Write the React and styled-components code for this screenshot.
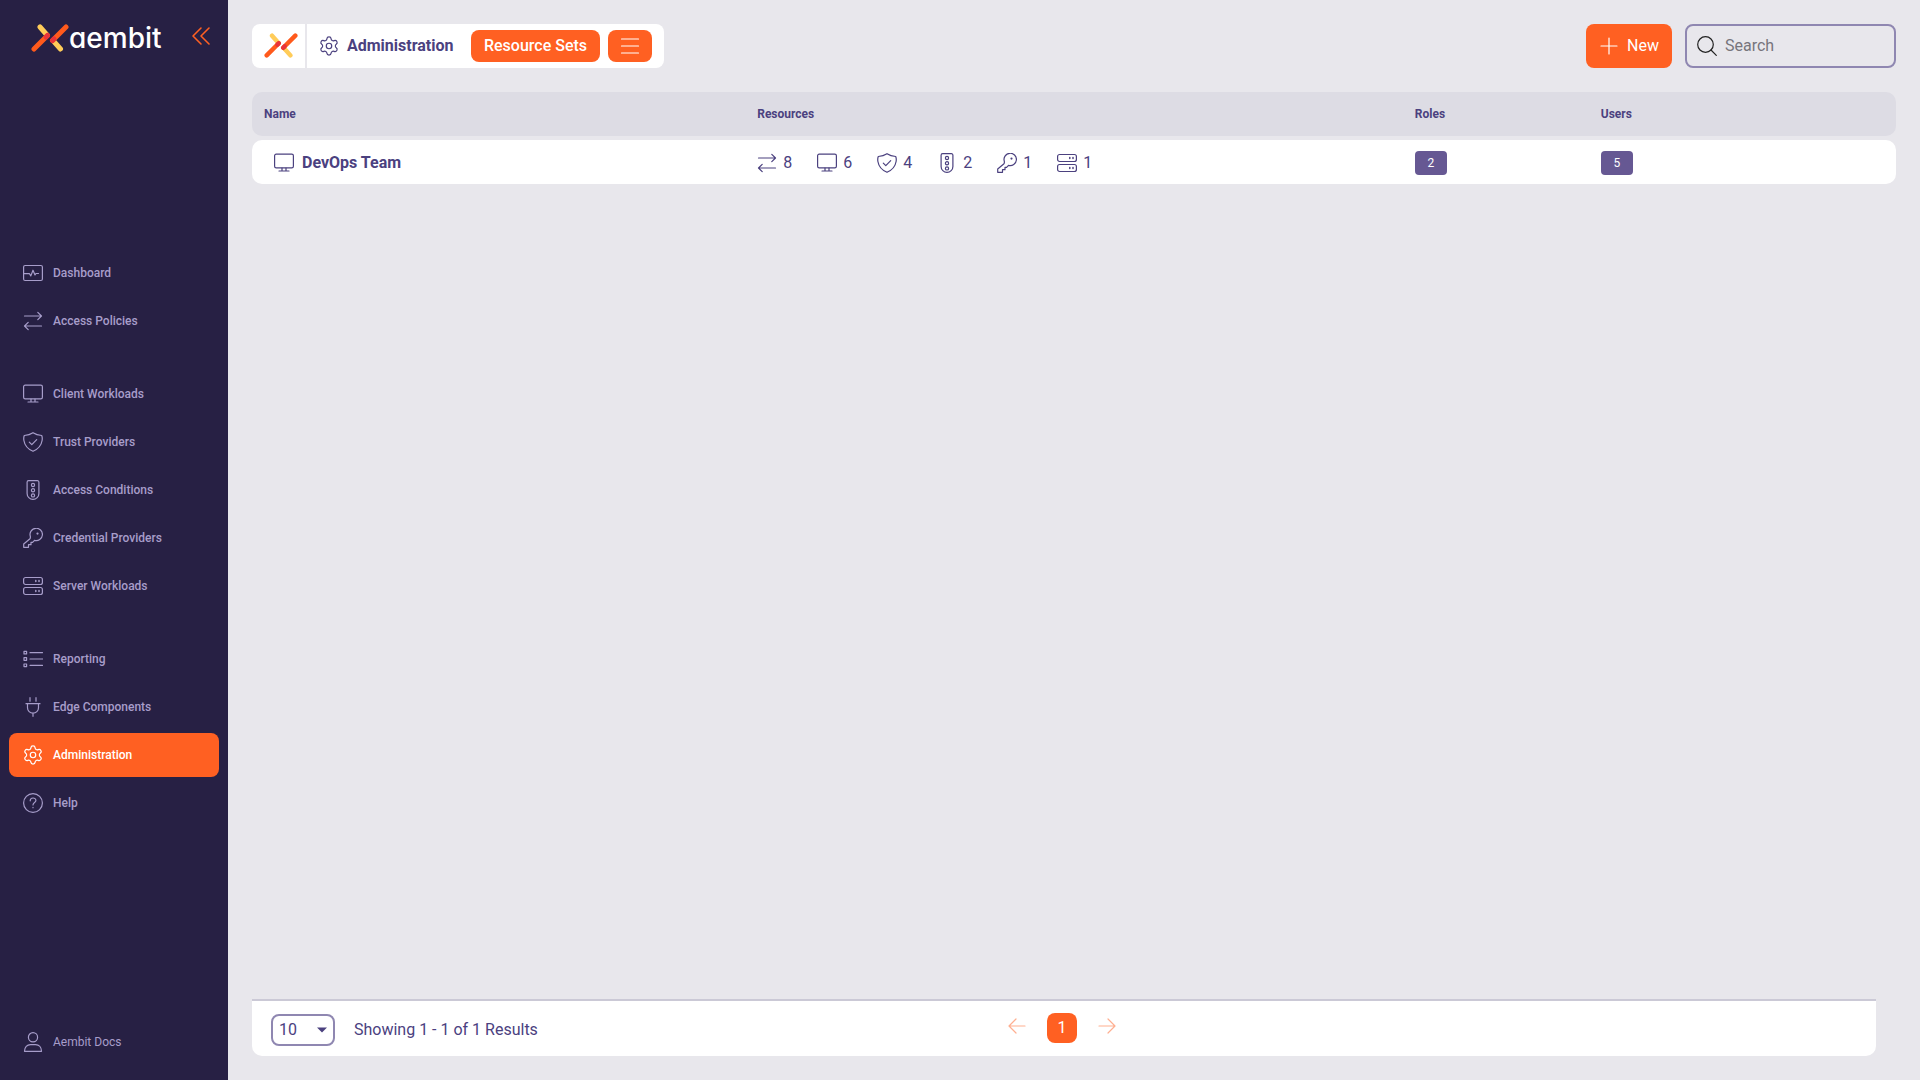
import React from 'react';
import styled, { createGlobalStyle } from 'styled-components';
import { Settings } from 'lucide-react';

const GlobalStyle = createGlobalStyle`
  * {
    box-sizing: border-box;
  }

  body {
    margin: 0;
    background: #e8e7ec;
    color: #4b417f;
    font-family: Roboto, 'Open Sans', sans-serif;
    font-size: 16px;
    line-height: 20px;
  }

  button, input, select {
    font: inherit;
    color: inherit;
  }
`

const Page = styled.div`
  display: flex;
  min-height: 100vh;
`

const Sidebar = styled.aside`
  display: grid;
  grid-template-rows: 1fr auto 1fr;
  flex: 0 0 228px;
  padding: 0 9px 4px;
  background: #272044;
`

const Brand = styled.div`
  display: flex;
  align-items: flex-start;
  justify-content: space-between;
  padding: 20px 8px 0 22px;
`

const BrandLink = styled.a`
  display: flex;
  align-items: center;
  height: 36px;
  color: #fff;
  font-family: Inter, sans-serif;
  font-size: 28px;
  font-weight: 500;
  font-feature-settings: 'cv11';
  line-height: 32px;
  text-decoration: none;
`

const CollapseButton = styled.button`
  display: flex;
  padding: 6px 0;
  border: 0;
  background: none;
  color: #ff6022;
  cursor: pointer;
`

const Nav = styled.nav`
  display: flex;
  flex-direction: column;
  gap: 29px;
`

const NavGroup = styled.div`
  display: flex;
  flex-direction: column;
  gap: 4px;
`

const NavItem = styled.a`
  display: flex;
  align-items: center;
  gap: 10px;
  height: 44px;
  padding: 0 14px;
  border-radius: 8px;
  background: ${props => (props.$active ? '#ff6022' : 'transparent')};
  color: ${props => (props.$active ? '#fff' : '#a79dca')};
  font-size: 12px;
  font-weight: ${props => (props.$light ? 400 : 500)};
  text-decoration: none;
`

const Account = styled.div`
  align-self: end;
  padding-bottom: 12px;
`

const Main = styled.main`
  display: flex;
  flex: 1;
  flex-direction: column;
  min-width: 0;
  padding: 24px;
`

const Toolbar = styled.header`
  display: flex;
  align-items: center;
  justify-content: space-between;
  margin-bottom: 20px;
`

const Crumbs = styled.div`
  display: flex;
  align-items: center;
  height: 44px;
  padding-right: 12px;
  border-radius: 8px;
  background: #fff;
`

const CrumbLogo = styled.a`
  display: flex;
  align-items: center;
  justify-content: center;
  width: 55px;
  height: 44px;
  padding-left: 4px;
  border-right: 2px solid #e8e7ec;
`

const Crumb = styled.a`
  display: flex;
  align-items: center;
  gap: 8px;
  min-width: 164px;
  padding: 0 12px;
  color: #4b417f;
  font-weight: 700;
  text-decoration: none;
`

const OrangeButton = styled.button`
  display: flex;
  align-items: center;
  justify-content: center;
  gap: 8px;
  min-width: ${props => props.$width || '44px'};
  height: ${props => (props.$tall ? '44px' : '32px')};
  padding: 0 12px;
  border: 0;
  border-radius: 8px;
  background: #ff6022;
  color: #fff;
  font-weight: ${props => (props.$tall ? 400 : 500)};
  cursor: pointer;

  & + & {
    margin-left: 8px;
  }
`

const Actions = styled.div`
  display: flex;
  gap: 13px;
`

const SearchBox = styled.label`
  display: flex;
  align-items: center;
  gap: 8px;
  width: 211px;
  height: 44px;
  padding: 0 10px;
  border: 2px solid #8f87b1;
  border-radius: 8px;
  color: #222;
`

const SearchInput = styled.input`
  flex: 1;
  min-width: 0;
  padding: 0;
  border: 0;
  outline: 0;
  background: none;

  &::placeholder {
    color: #77757c;
    opacity: 1;
  }
`

const Table = styled.table`
  width: 100%;
  table-layout: fixed;
  border-collapse: separate;
  border-spacing: 0 4px;
  text-align: left;
`

const cellEnds = `
  &:first-child {
    border-radius: 10px 0 0 10px;
  }

  &:last-child {
    border-radius: 0 10px 10px 0;
  }
`

const HeadCell = styled.th`
  width: ${props => props.$width || 'auto'};
  height: 44px;
  padding: 0 12px;
  background: #dddce4;
  font-size: 12px;
  font-weight: 700;
  ${cellEnds}
`

const Cell = styled.td`
  height: 44px;
  padding: 2px 12px 0;
  background: #fff;
  ${cellEnds}
`

const SetName = styled.a`
  display: flex;
  align-items: center;
  gap: 8px;
  padding-left: 10px;
  color: inherit;
  font-weight: 700;
  text-decoration: none;
`

const Counts = styled.div`
  display: flex;
  gap: 24px;
`

const Count = styled.span`
  display: flex;
  align-items: center;
  gap: 6px;
  width: 36px;
`

const Badge = styled.span`
  display: flex;
  align-items: center;
  justify-content: center;
  width: 32px;
  height: 24px;
  border-radius: 4px;
  background: #665893;
  color: #fff;
  font-size: 12px;
`

const Footer = styled.footer`
  display: grid;
  grid-template-columns: 1fr auto 1fr;
  align-items: center;
  height: 57px;
  margin: auto 20px 0 0;
  padding: 2px 23px 0 19px;
  border-top: 2px solid #cbc9d6;
  border-radius: 0 0 10px 10px;
  background: #fff;
`

const PageSize = styled.div`
  display: flex;
  align-items: center;
  gap: 19px;
`

const SelectWrap = styled.label`
  display: flex;
  position: relative;

  svg {
    position: absolute;
    top: 13px;
    right: 8px;
    pointer-events: none;
  }
`

const Select = styled.select`
  width: 64px;
  height: 32px;
  padding: 0 6px;
  border: 2px solid #8f87b1;
  border-radius: 8px;
  background: #fff;
  appearance: none;
`

const Pager = styled.div`
  display: flex;
  align-items: center;
  gap: 20px;
  padding-bottom: 4px;
`

const PagerArrow = styled.button`
  display: flex;
  padding: 0 0 4px;
  border: 0;
  background: none;
  color: #ffaf90;
`

const PagerNumber = styled.button`
  width: 30px;
  height: 30px;
  padding: 0;
  border: 0;
  border-radius: 8px;
  background: #ff6022;
  color: #fff;
`

const Icon = ({ size = 20, children }) => (
    <svg width={size} height={size} viewBox="0 0 20 20" fill="none" stroke="currentColor" strokeWidth="1.2" strokeLinecap="round" strokeLinejoin="round" aria-hidden="true">
        {children}
    </svg>
)

const DashboardIcon = () => (
    <Icon>
        <rect x="0.6" y="2.5" width="18.8" height="15" rx="1.5" />
        <path d="M1 10.7h5.5l1.3 2.2L10 7.2l2 4.8 1-1.5h2.5" />
    </Icon>
)

const ArrowsIcon = () => (
    <Icon>
        <path d="M1.5 5h17M14.8 1.300l3.700 3.700-3.700 3.700M18.5 15h-17M5.200 11.300L1.500 15l3.700 3.700" />
    </Icon>
)

const MonitorIcon = () => (
    <Icon>
        <rect x="0.6" y="1.2" width="18.8" height="13.6" rx="1.6" />
        <path d="M8 15v2.700M12 15v2.700M5 18h10" />
    </Icon>
)

const ShieldIcon = () => (
    <Icon>
        <path d="M10 .7C7.4 2.4 4.5 3.2 1.3 3.5c-.6 1.5-.7 3.2-.4 5 .8 5 4.2 8.700 9.100 10.800 4.900-2.100 8.300-5.800 9.100-10.800.3-1.800.2-3.500-.4-5C15.500 3.200 12.600 2.400 10 .7z" />
        <path d="M6.300 10.200l2.500 2.500 4.900-5" />
    </Icon>
)

const TrafficIcon = () => (
    <Icon>
        <path d="M5.600.7h8.800a1.500 1.500 0 0 1 1.500 1.500v11.200a5.900 5.900 0 0 1-11.800 0V2.200A1.500 1.500 0 0 1 5.600.7z" />
        <circle cx="10" cy="5" r="1.6" />
        <circle cx="10" cy="10.2" r="1.6" />
        <circle cx="10" cy="15.4" r="1.6" />
    </Icon>
)

const KeyIcon = () => (
    <Icon>
        <path d="M.7 16v3.300h4.800v-2.600H8v-2.400h1.600l1.900-1.900a6.200 6.200 0 1 0-4.200-4.100c.2 1 .1 2-.6 2.700z" />
        <circle cx="14.5" cy="5.600" r=".5" fill="currentColor" />
    </Icon>
)

const ServerIcon = () => (
    <Icon>
        <rect x="0.6" y="1.5" width="18.8" height="7" rx="2" />
        <rect x="0.6" y="11.5" width="18.8" height="7" rx="2" />
        <path d="M12.800 4.600v.8M16 4.600v.8M12.800 14.600v.8M16 14.600v.8" strokeWidth="1.5" />
    </Icon>
)

const ReportIcon = () => (
    <Icon>
        <path d="M7 3.700h12.500M7 10h12.500M7 16.300h12.500" />
        <rect x="1" y="2.300" width="2.600" height="2.600" />
        <rect x="1" y="8.700" width="2.600" height="2.600" />
        <rect x="1" y="15" width="2.600" height="2.600" />
    </Icon>
)

const PlugIcon = () => (
    <Icon>
        <path d="M7 .7v3.500M13 .7v3.500M3 6.700h14M4.500 6.700v4a5.500 5.500 0 0 0 11 0v-4M10 16.300v3" />
    </Icon>
)

const GearIcon = () => <Settings size={20} strokeWidth={1.3} viewBox="1 1 22 22" aria-hidden="true" />

const HelpIcon = () => (
    <Icon>
        <circle cx="10" cy="10" r="9.4" />
        <path d="M7.200 7.800c0-3.700 5.700-3.600 5.700-.3 0 2.100-2.900 2.100-2.900 4.500M10 14.400v.3" />
    </Icon>
)

const PersonIcon = () => (
    <Icon>
        <circle cx="10" cy="5.300" r="4.600" />
        <path d="M1.500 19.300c0-4.200 2.600-6.700 6-6.700h5c3.400 0 6 2.500 6 6.700z" />
    </Icon>
)

const Mark = ({ width }) => (
    <svg width={width} viewBox="0 0 38 28" fill="none" strokeWidth="5" strokeLinecap="round" aria-hidden="true">
        <path d="M9 3l7 8M22 16.500l7.500 8.500" stroke="#ffcc59" />
        <path d="M3 25l13.500-13.500M21.500 16.500L35 3" stroke="#ff5a1c" />
        <path d="M15 13l1.500-1.500M21.500 16.500L23 15" stroke="#e8343a" />
    </svg>
)

const navGroups = [
    [
        { label: 'Dashboard', icon: DashboardIcon },
        { label: 'Access Policies', icon: ArrowsIcon },
    ],
    [
        { label: 'Client Workloads', icon: MonitorIcon },
        { label: 'Trust Providers', icon: ShieldIcon },
        { label: 'Access Conditions', icon: TrafficIcon },
        { label: 'Credential Providers', icon: KeyIcon },
        { label: 'Server Workloads', icon: ServerIcon },
    ],
    [
        { label: 'Reporting', icon: ReportIcon },
        { label: 'Edge Components', icon: PlugIcon },
        { label: 'Administration', icon: GearIcon, active: true },
        { label: 'Help', icon: HelpIcon },
    ],
]

const resourceSets = [
    {
        name: 'DevOps Team',
        resources: [
            { icon: ArrowsIcon, count: 8 },
            { icon: MonitorIcon, count: 6 },
            { icon: ShieldIcon, count: 4 },
            { icon: TrafficIcon, count: 2 },
            { icon: KeyIcon, count: 1 },
            { icon: ServerIcon, count: 1 },
        ],
        roles: 2,
        users: 5,
    },
]

const SideMenu = () => (
    <Sidebar>
        <Brand>
            <BrandLink href="#home">
                <Mark width={38} />
                aembit
            </BrandLink>
            <CollapseButton aria-label="Collapse menu">
                <Icon>
                    <path d="M10 2L2 10l8 8M18 2l-8 8 8 8" strokeWidth="1.6" />
                </Icon>
            </CollapseButton>
        </Brand>
        <Nav>
            {navGroups.map((group, i) => (
                <NavGroup key={i}>
                    {group.map(({ label, icon: ItemIcon, active }) => (
                        <NavItem key={label} href="#nav" $active={active}>
                            <ItemIcon />
                            {label}
                        </NavItem>
                    ))}
                </NavGroup>
            ))}
        </Nav>
        <Account>
            <NavItem href="#account" $light>
                <PersonIcon />
                Aembit Docs
            </NavItem>
        </Account>
    </Sidebar>
)

const TopBar = () => (
    <Toolbar>
        <Crumbs>
            <CrumbLogo href="#home" aria-label="Home">
                <Mark width={34} />
            </CrumbLogo>
            <Crumb href="#administration">
                <GearIcon />
                Administration
            </Crumb>
            <OrangeButton $width="129px">Resource Sets</OrangeButton>
            <OrangeButton aria-label="More sections">
                <Icon>
                    <path d="M1.500 3h17M1.500 10h17M1.500 17h17" />
                </Icon>
            </OrangeButton>
        </Crumbs>
        <Actions>
            <OrangeButton $tall $width="86px">
                <Icon>
                    <path d="M10 2v16M2 10h16" />
                </Icon>
                New
            </OrangeButton>
            <SearchBox>
                <Icon>
                    <circle cx="8.5" cy="8.5" r="7.8" />
                    <path d="M14 14l5.300 5.300" />
                </Icon>
                <SearchInput type="text" placeholder="Search" aria-label="Search" />
            </SearchBox>
        </Actions>
    </Toolbar>
)

const ResourceTable = () => (
    <Table>
        <thead>
            <tr>
                <HeadCell $width="30%">Name</HeadCell>
                <HeadCell $width="40%">Resources</HeadCell>
                <HeadCell $width="186px">Roles</HeadCell>
                <HeadCell>Users</HeadCell>
            </tr>
        </thead>
        <tbody>
            {resourceSets.map(set => (
                <tr key={set.name}>
                    <Cell>
                        <SetName href="#set">
                            <MonitorIcon />
                            {set.name}
                        </SetName>
                    </Cell>
                    <Cell>
                        <Counts>
                            {set.resources.map(({ icon: CountIcon, count }, i) => (
                                <Count key={i}>
                                    <CountIcon />
                                    {count}
                                </Count>
                            ))}
                        </Counts>
                    </Cell>
                    <Cell><Badge>{set.roles}</Badge></Cell>
                    <Cell><Badge>{set.users}</Badge></Cell>
                </tr>
            ))}
        </tbody>
    </Table>
)

const TableFooter = () => (
    <Footer>
        <PageSize>
            <SelectWrap>
                <Select aria-label="Rows per page" defaultValue="10">
                    <option>10</option>
                    <option>25</option>
                    <option>50</option>
                </Select>
                <svg width="10" height="6" viewBox="0 0 10 6" aria-hidden="true">
                    <path d="M0 .5h10L5 5.500z" fill="#4b417f" />
                </svg>
            </SelectWrap>
            <span>Showing 1 - 1 of 1 Results</span>
        </PageSize>
        <Pager>
            <PagerArrow aria-label="Previous page">
                <Icon>
                    <path d="M18 10H2M9 3l-7 7 7 7" />
                </Icon>
            </PagerArrow>
            <PagerNumber>1</PagerNumber>
            <PagerArrow aria-label="Next page">
                <Icon>
                    <path d="M2 10h16M11 3l7 7-7 7" />
                </Icon>
            </PagerArrow>
        </Pager>
    </Footer>
)

const App = () => (
    <Page>
        <GlobalStyle />
        <SideMenu />
        <Main>
            <TopBar />
            <ResourceTable />
            <TableFooter />
        </Main>
    </Page>
)

export default App;
